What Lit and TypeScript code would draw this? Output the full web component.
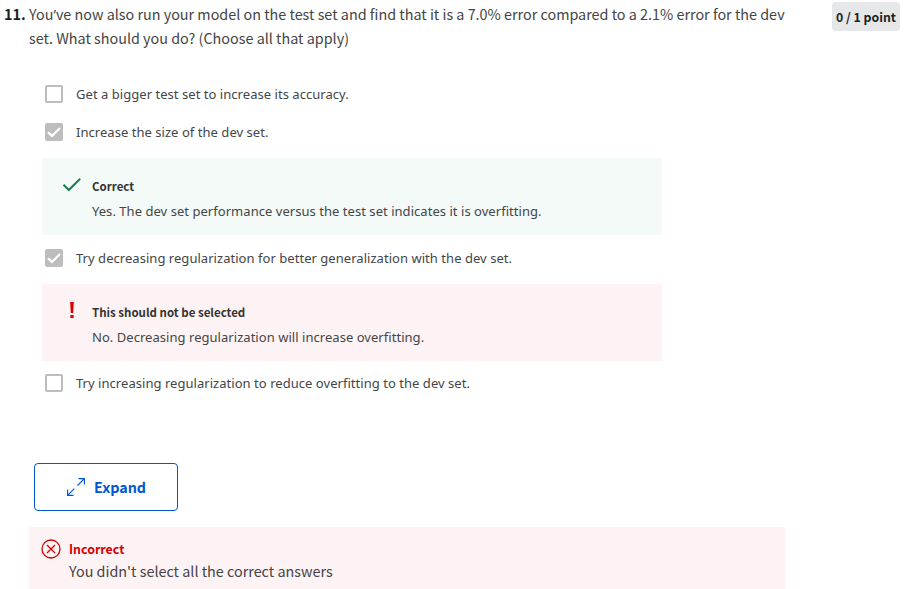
import { LitElement, html, css, nothing } from "lit";
import { customElement } from "lit/decorators.js";

interface Feedback { ok: boolean; title: string; text: string; }
interface Option { label: string; checked: boolean; feedback?: Feedback; }

const OPTIONS: Option[] = [
  { label: "Get a bigger test set to increase its accuracy.", checked: false },
  {
    label: "Increase the size of the dev set.", checked: true,
    feedback: { ok: true, title: "Correct", text: "Yes. The dev set performance versus the test set indicates it is overfitting." },
  },
  {
    label: "Try decreasing regularization for better generalization with the dev set.", checked: true,
    feedback: { ok: false, title: "This should not be selected", text: "No. Decreasing regularization will increase overfitting." },
  },
  { label: "Try increasing regularization to reduce overfitting to the dev set.", checked: false },
];

@customElement("app-root")
export class AppRoot extends LitElement {
  static styles = css`
    :host { display: block; height: 589px; overflow: hidden; background: #fff; color: #333;
      font-family: "Noto Sans CJK SC", "Noto Sans", sans-serif; }
    * { box-sizing: border-box; }
    .head { display: flex; align-items: flex-start; height: 75px; padding: 2px 6px 0 4px; }
    .num { width: 25px; flex: none; font-size: 14.4px; font-weight: 700; line-height: 24px; color: #1f1f1f; white-space: nowrap; }
    .prompt { width: 780px; flex: none; font-size: 14.36px; font-weight: 400; line-height: 24px; white-space: nowrap; color: #444; }
    .apos { font-family: "Noto Sans", sans-serif; line-height: 1; }
    .badge { margin: 0 0 0 auto; width: 68px; height: 29px; border-radius: 4px; background: #e5e7e8;
      font-size: 12.3px; font-weight: 700; line-height: 31px; text-align: center; color: #1f1f1f; white-space: nowrap; }
    .options { padding-left: 42px; width: 662px; }
    .option { display: flex; align-items: center; height: 38px; padding-left: 3px; }
    .option:last-child { margin-top: -1px; }
    .box { width: 18px; height: 18px; flex: none; border: 2px solid #bdbdbd; border-radius: 2px; }
    .box.on { background: #bdbdbd; border: 0; }
    .box svg { display: block; }
    .label { margin-left: 13px; }
    .label, .fb-text { font-family: "Noto Sans", sans-serif; font-size: 13px; line-height: 20px; letter-spacing: .04px; white-space: nowrap; color: #434648; }
    .feedback { display: flex; height: 77px; margin: 7px 0 4px; padding: 18px 0 0 20px; }
    .feedback.ok { background: #f4faf8; }
    .feedback.bad { background: #fef3f4; }
    .fb-icon { width: 30px; flex: none; }
    .fb-icon svg { display: block; }
    .fb-title { font-size: 11.5px; font-weight: 700; line-height: 20px; white-space: nowrap; }
    .fb-text { margin-top: 5px; }
    .expand { display: flex; align-items: center; width: 144px; height: 48px; margin: 61px 0 16px 34px; padding: 0 0 0 32px;
      border: 1px solid #0056d2; border-radius: 4px; background: #fff; color: #0056d2;
      font-family: inherit; font-size: 14.3px; font-weight: 700; }
    .expand svg { margin-right: 9px; }
    .expand span { margin-top: -2px; }
    .result { display: flex; width: 756px; height: 62px; margin-left: 29px; padding: 10px 0 0 12px; background: #fdf3f4; }
    .result svg { margin: 2px 8px 0 0; flex: none; }
    .r-title { font-size: 12.4px; font-weight: 700; line-height: 24px; color: #d30001; }
    .r-text { font-size: 14.36px; font-weight: 400; line-height: 20px; white-space: nowrap; color: #444; }
  `;

  private tick() {
    return html`<svg width="18" height="18" viewBox="0 0 18 18"><path d="M3 9.2 7 13 15 5" fill="none" stroke="#fff" stroke-width="2.2"/></svg>`;
  }

  private feedbackIcon(ok: boolean) {
    return ok
      ? html`<svg width="20" height="20" viewBox="0 0 20 20"><path d="M1.5 8.8 6.8 14 18.2 2.7" fill="none" stroke="#1d7c50" stroke-width="2"/></svg>`
      : html`<svg width="20" height="20" viewBox="0 0 20 20"><path d="M8.2 0h3.6l-.6 11H8.8zM8.4 12.9h3.2v3H8.4z" fill="#d30001"/></svg>`;
  }

  private option(o: Option) {
    return html`
      <div class="option"><span class="box ${o.checked ? "on" : ""}">${o.checked ? this.tick() : nothing}</span><span class="label">${o.label}</span></div>
      ${o.feedback ? html`
        <div class="feedback ${o.feedback.ok ? "ok" : "bad"}">
          <div class="fb-icon">${this.feedbackIcon(o.feedback.ok)}</div>
          <div><div class="fb-title">${o.feedback.title}</div><div class="fb-text">${o.feedback.text}</div></div>
        </div>` : nothing}`;
  }

  render() {
    return html`
      <div class="head">
        <div class="num">11.</div>
        <div class="prompt">You<span class="apos">’</span>ve now also run your model on the test set and find that it is a 7.0% error compared to a 2.1% error for the dev<br>set. What should you do? (Choose all that apply)</div>
        <div class="badge">0 / 1 point</div>
      </div>
      <div class="options">${OPTIONS.map((o) => this.option(o))}</div>
      <button class="expand">
        <svg width="18" height="18" viewBox="0 0 18 18" fill="none" stroke="#0056d2" stroke-width="1.1"><path d="M.8 17.2 7.3 10.7M10.5 7.5 17.2.8M11.5.6h5.9v5.9M.6 11.5v5.9h5.9"/></svg>
        <span>Expand</span>
      </button>
      <div class="result">
        <svg width="20" height="20" viewBox="0 0 20 20" fill="none" stroke="#d30001" stroke-width="1.3"><circle cx="10" cy="10" r="9"/><path d="m6 6 8 8m0-8-8 8"/></svg>
        <div><div class="r-title">Incorrect</div><div class="r-text">You didn't select all the correct answers</div></div>
      </div>`;
  }
}
